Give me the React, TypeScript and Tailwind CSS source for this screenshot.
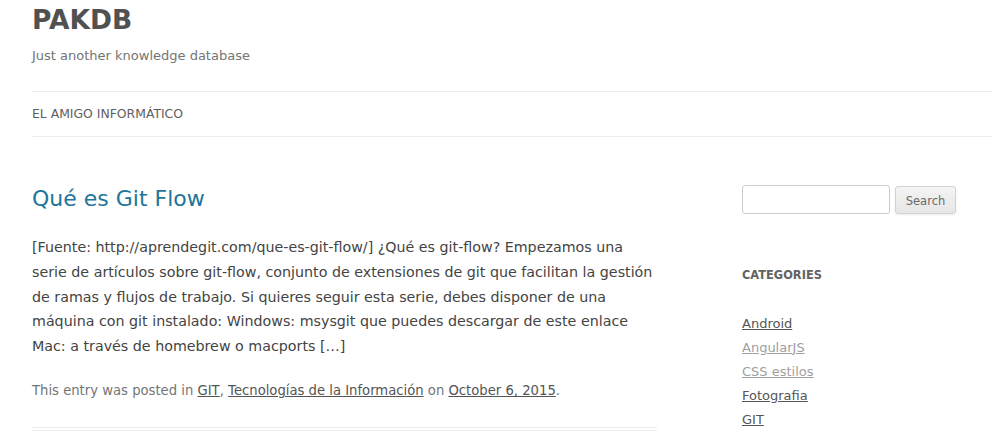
import React from "react";

const cats = [
  { name: "Android", visited: false },
  { name: "AngularJS", visited: true },
  { name: "CSS estilos", visited: true },
  { name: "Fotografia", visited: false },
  { name: "GIT", visited: false },
];

export default function App() {
  return (
    <div className="w-[1002px] h-[432px] overflow-hidden bg-white font-['DejaVu_Sans',sans-serif]">
      <div className="ml-[32px] w-[960px]">
        <header>
          <h1 className="text-[26.5px] font-bold leading-[40px] text-[#515151]">PAKDB</h1>
          <p className="mt-[4px] text-[13px] leading-[24px] text-[#757575]">Just another knowledge database</p>
          <nav className="mt-[23px] border-y border-[#ededed] h-[46px] text-[12.4px] leading-[44px] text-[#5e5e5e] uppercase">
            El amigo informático
          </nav>
        </header>
        <div className="flex justify-between">
          <main className="w-[625px] pt-[46px]">
            <article className="border-b-4 border-double border-[#ededed] pb-[24px]">
              <h2 className="text-[22px] leading-[32px] text-[#21759b]">Qué es Git Flow</h2>
              <p className="mt-[20px] whitespace-nowrap text-[14.25px] leading-[24.75px] text-[#444444]">
                [Fuente: http://aprendegit.com/que-es-git-flow/] ¿Qué es git-flow? Empezamos una
                <br />
                serie de artículos sobre git-flow, conjunto de extensiones de git que facilitan la gestión
                <br />
                de ramas y flujos de trabajo. Si quieres seguir esta serie, debes disponer de una
                <br />
                máquina con git instalado: Windows: msysgit que puedes descargar de este enlace
                <br />
                Mac: a través de homebrew o macports […]
              </p>
              <footer className="mt-[20.5px] text-[13.2px] leading-[24px] text-[#757575]">
                This entry was posted in <a className="underline text-[#555555]">GIT</a>,{" "}
                <a className="underline text-[#555555]">Tecnologías de la Información</a> on{" "}
                <a className="underline text-[#555555]">October 6, 2015</a>.
              </footer>
            </article>
          </main>
          <aside className="w-[250px] pt-[48px]">
            <form className="flex items-start gap-[5px]">
              <input
                type="text"
                className="w-[148px] h-[29px] border border-[#cccccc] rounded-[3px] bg-white"
              />
              <button
                type="button"
                className="mt-[1px] w-[61px] h-[28px] pt-[3px] border border-[#d2d2d2] rounded-[3px] bg-gradient-to-b from-[#f4f4f4] to-[#e6e6e6] shadow-[0_1px_2px_rgba(64,64,64,0.1)] text-[11.5px] text-[#6a6a6a]"
              >
                Search
              </button>
            </form>
            <h3 className="mt-[53px] text-[11.4px] font-bold leading-[16px] uppercase text-[#636363]">Categories</h3>
            <ul className="mt-[28.6px]">
              {cats.map((c) => (
                <li key={c.name} className="text-[13px] leading-[24px]">
                  <a className={c.visited ? "underline text-[#9f9f9f]" : "underline text-[#555555]"}>{c.name}</a>
                </li>
              ))}
            </ul>
          </aside>
        </div>
      </div>
    </div>
  );
}
